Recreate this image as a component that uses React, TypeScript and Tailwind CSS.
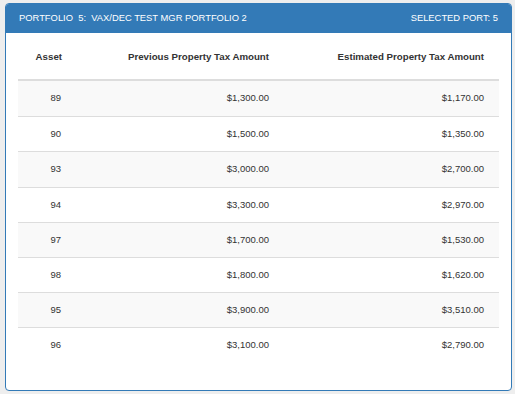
import React from "react";

const rows = [
  ["89", "$1,300.00", "$1,170.00"],
  ["90", "$1,500.00", "$1,350.00"],
  ["93", "$3,000.00", "$2,700.00"],
  ["94", "$3,300.00", "$2,970.00"],
  ["97", "$1,700.00", "$1,530.00"],
  ["98", "$1,800.00", "$1,620.00"],
  ["95", "$3,900.00", "$3,510.00"],
  ["96", "$3,100.00", "$2,790.00"],
];

export default function App() {
  return (
    <div
      className="w-[515px] h-[394px] bg-[#eeeeee] pt-[3px] pl-[5px]"
      style={{ fontFamily: '"Liberation Sans", Arial, sans-serif' }}
    >
      <div className="w-[507px] h-[388px] border border-[#337ab7] rounded-[4px] bg-white overflow-hidden flex flex-col">
        <div className="h-[29px] bg-[#337ab7] text-white flex items-center justify-between px-[13px] text-[9.4px]">
          <span className="whitespace-pre">PORTFOLIO  5:  VAX/DEC TEST MGR PORTFOLIO 2</span>
          <span>SELECTED PORT: 5</span>
        </div>
        <div className="px-[12px] text-[#333333] text-[9.5px]">
          <div className="flex h-[48px] items-center font-bold text-[9.7px] border-b-2 border-[#dddddd] pt-[3px]">
            <div className="w-[58px] pr-[14px] text-right">Asset</div>
            <div className="w-[207px] pr-[14px] text-right">Previous Property Tax Amount</div>
            <div className="w-[215px] pr-[14px] text-right">Estimated Property Tax Amount</div>
          </div>
          {rows.map((r, i) => (
            <div
              key={i}
              className={`flex h-[35.2px] items-center ${i > 0 ? "border-t border-[#dddddd]" : ""} ${
                i % 2 === 0 ? "bg-[#f9f9f9]" : "bg-white"
              }`}
            >
              <div className="w-[57px] pr-[14px] text-right">{r[0]}</div>
              <div className="w-[208px] pr-[14px] text-right">{r[1]}</div>
              <div className="w-[215px] pr-[14px] text-right">{r[2]}</div>
            </div>
          ))}
        </div>
      </div>
    </div>
  );
}
